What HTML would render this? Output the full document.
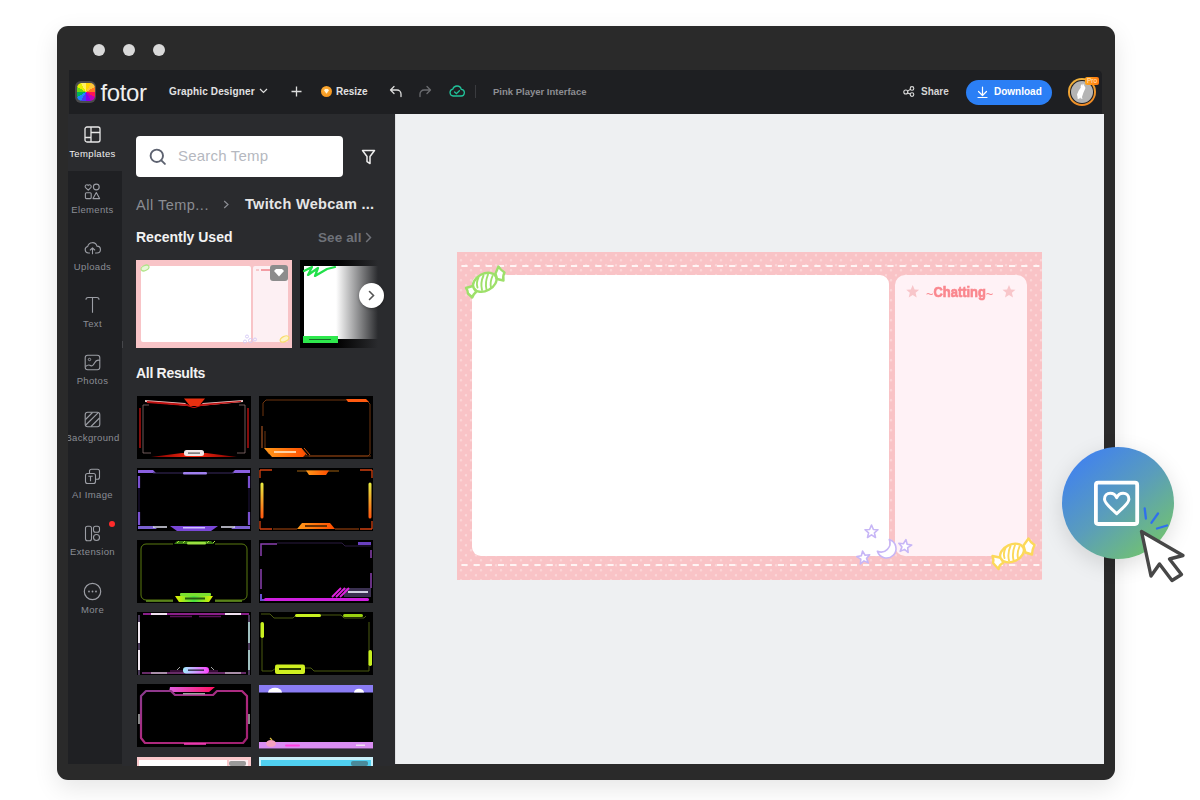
<!DOCTYPE html>
<html><head><meta charset="utf-8">
<style>
*{margin:0;padding:0;box-sizing:border-box}
html,body{width:1200px;height:800px;overflow:hidden;background:#fff;font-family:"Liberation Sans",sans-serif}
.a{position:absolute}
#win{left:57px;top:26px;width:1058px;height:754px;background:#2a2a2a;border-radius:11px;box-shadow:0 8px 24px rgba(0,0,0,0.10)}
.dot{width:12px;height:12px;border-radius:50%;background:#d9d9d9;top:44px}
#hdr{left:69px;top:70px;width:1032.5px;height:44px;background:#1e1f22;border-radius:0 5px 0 0}
#side{left:68px;top:114px;width:54px;height:650px;background:#1f2023}
#panel{left:122px;top:114px;width:273px;height:652px;background:#2a2b2e}
#canvas{left:395px;top:114px;width:709px;height:650px;background:#eef0f2;border-left:1.5px solid #dfe0e3}
.t{color:#fff;white-space:nowrap}
.sl{left:62px;width:61px;text-align:center;font-size:9.5px;line-height:12px;letter-spacing:0.35px;color:#8a8d94}
.th{filter:blur(0.35px)}
</style></head>
<body>
<div id="win" class="a"></div>
<div class="a dot" style="left:93px"></div>
<div class="a dot" style="left:123px"></div>
<div class="a dot" style="left:153px"></div>
<div id="hdr" class="a"></div>
<div id="side" class="a"></div>
<div id="panel" class="a"></div>
<div id="canvas" class="a"></div>

<!-- header content -->
<div class="a" style="left:75px;top:81px;width:21px;height:22px;border-radius:6px;background:#4a4a4c"></div>
<div class="a" style="left:77px;top:83px;width:18px;height:18px;border-radius:5px;background:conic-gradient(from 0deg at 50% 50%,#ffd400 0 30deg,#ffc53a 30deg 60deg,#ff7a1f 60deg 90deg,#ff1454 90deg 120deg,#c000b8 120deg 150deg,#8a00ef 150deg 180deg,#4540f5 180deg 210deg,#1a8cff 210deg 240deg,#00b45a 240deg 270deg,#6fd714 270deg 300deg,#e4ee00 300deg 330deg,#fff060 330deg 360deg)"></div>
<div class="a t" style="left:100.5px;top:78px;font-size:24px;line-height:30px;letter-spacing:-0.4px;color:#eeeeee">fotor</div>
<div class="a t" id="gd" style="left:169px;top:85px;letter-spacing:0.15px;font-size:10px;line-height:13px;font-weight:bold;color:#e2e2e2">Graphic Designer</div>
<svg class="a" style="left:259px;top:88px" width="9" height="6" viewBox="0 0 9 6"><path d="M1 1l3.5 3.5L8 1" fill="none" stroke="#ddd" stroke-width="1.2"/></svg>
<svg class="a" style="left:291px;top:86px" width="11" height="11" viewBox="0 0 11 11"><path d="M5.5 0.5v10M0.5 5.5h10" stroke="#ddd" stroke-width="1.3"/></svg>
<div class="a" style="left:321px;top:86px;width:11px;height:11px;border-radius:50%;background:radial-gradient(circle at 40% 35%,#ffb13b,#f08a12)"></div>
<svg class="a" style="left:323px;top:88px" width="7" height="7" viewBox="0 0 7 7"><path d="M1 2.2L2.2 1h2.6L6 2.2 3.5 5.8z" fill="#fff3d9"/></svg>
<div class="a t" id="rs" style="left:336px;top:85px;font-size:10px;line-height:13px;font-weight:bold;color:#e2e2e2">Resize</div>
<svg class="a" style="left:389px;top:85px" width="14" height="13" viewBox="0 0 14 13"><path d="M5 1.5L1.5 5 5 8.5M1.5 5H8a4 4 0 0 1 4 4v2.5" fill="none" stroke="#ddd" stroke-width="1.3" stroke-linecap="round" stroke-linejoin="round"/></svg>
<svg class="a" style="left:418px;top:85px" width="14" height="13" viewBox="0 0 14 13"><path d="M9 1.5L12.5 5 9 8.5M12.5 5H6a4 4 0 0 0 -4 4v2.5" fill="none" stroke="#6b6c70" stroke-width="1.3" stroke-linecap="round" stroke-linejoin="round"/></svg>
<svg class="a" style="left:449px;top:84px" width="16" height="14" viewBox="0 0 16 14"><path d="M4.2 12H11.8a3.3 3.3 0 0 0 .5-6.6A4.4 4.4 0 0 0 3.8 5.1 3.5 3.5 0 0 0 4.2 12z" fill="none" stroke="#21c29a" stroke-width="1.3"/><path d="M5.6 8l1.8 1.7 3-3" fill="none" stroke="#21c29a" stroke-width="1.3" stroke-linecap="round"/></svg>
<div class="a" style="left:475px;top:85px;width:1px;height:13px;background:#3a3b3f"></div>
<div class="a t" id="pp" style="left:493px;top:86px;font-size:9.5px;line-height:12px;font-weight:bold;color:#8d8e93">Pink Player Interface</div>
<svg class="a" style="left:903px;top:86px" width="12" height="11" viewBox="0 0 12 11"><circle cx="2.8" cy="6" r="2" fill="none" stroke="#ddd" stroke-width="1.1"/><circle cx="9" cy="2.4" r="1.8" fill="none" stroke="#ddd" stroke-width="1.1"/><circle cx="9" cy="8.6" r="1.8" fill="none" stroke="#ddd" stroke-width="1.1"/><path d="M4.6 5.1L7.3 3.4M4.6 6.9L7.3 8" stroke="#ddd" stroke-width="1.1"/></svg>
<div class="a t" id="sh" style="left:921px;top:85px;font-size:10px;line-height:13px;font-weight:bold;color:#d4d4d4">Share</div>
<div class="a" style="left:966px;top:80px;width:86px;height:25px;border-radius:13px;background:#2b7ff5"></div>
<svg class="a" style="left:977px;top:86px" width="11" height="13" viewBox="0 0 11 13"><path d="M5.5 1v8.5M1.5 5.5l4 4 4-4M1 11.5h9" fill="none" stroke="#fff" stroke-width="1.2" stroke-linecap="round" stroke-linejoin="round"/></svg>
<div class="a t" id="dl" style="left:994px;top:85px;font-size:10px;line-height:13px;font-weight:bold">Download</div>
<div class="a" style="left:1068px;top:78px;width:28px;height:28px;border-radius:50%;background:linear-gradient(160deg,#f0b840,#ee8220)"></div>
<div class="a" style="left:1070.2px;top:80.2px;width:23.6px;height:23.6px;border-radius:50%;background:#1e1f22"></div>
<div class="a" style="left:1070.6px;top:80.6px;width:22.8px;height:22.8px;border-radius:50%;background:#b4b4b4"></div>
<svg class="a" style="left:1074px;top:82px" width="16" height="19" viewBox="0 0 16 19"><path d="M8.2 1.5l.6 2.2 1.2-2.5.3 2.8c.8.6 1.2 1.5 1 2.4l-1.8 4.2-1.6 4.6.8 1.2-1.8.4-.6-1.2-1.3 1.3-1.6-.3.2-1.4-.6-2.6 1.6-3.8 2.2-3.3-.2-1.6z" fill="#fff"/></svg>
<div class="a" style="left:1085px;top:76.5px;width:14px;height:8.5px;border-radius:2px;background:linear-gradient(90deg,#ffa61c,#ff7810)"></div>
<div class="a t" style="left:1085px;top:77px;font-size:6.5px;line-height:8px;width:14px;text-align:center;color:#ffe6c8">Pro</div>


<!-- sidebar -->
<div class="a" style="left:68px;top:114px;width:54px;height:57px;background:#2a2b2e"></div>
<svg class="a" style="left:84px;top:126px" width="17" height="17" viewBox="0 0 17 17"><rect x="1" y="1" width="15" height="15" rx="2" fill="none" stroke="#e8e8e8" stroke-width="1.3"/><path d="M7 1v15M7 6.5h9M1 11.5h6" stroke="#e8e8e8" stroke-width="1.3"/></svg>
<div class="a t sl" style="top:148px;color:#f0f0f0">Templates</div>
<svg class="a" style="left:84px;top:183px" width="17" height="17" viewBox="0 0 17 17"><path d="M4.2 7.2L1.6 4.6a1.7 1.7 0 0 1 2.6-2.2 1.7 1.7 0 0 1 2.6 2.2z" fill="none" stroke="#9c9ea5" stroke-width="1.1"/><circle cx="12.3" cy="4" r="2.9" fill="none" stroke="#9c9ea5" stroke-width="1.1"/><rect x="1.4" y="9.8" width="5.8" height="5.8" rx="1" fill="none" stroke="#9c9ea5" stroke-width="1.1"/><path d="M12.3 9.6l3.3 6H9z" fill="none" stroke="#9c9ea5" stroke-width="1.1" stroke-linejoin="round"/></svg>
<div class="a t sl" style="top:204px">Elements</div>
<svg class="a" style="left:84px;top:240px" width="17" height="15" viewBox="0 0 17 15"><path d="M5.5 13H4.3a3.3 3.3 0 0 1-.6-6.5 4.8 4.8 0 0 1 9.3-.4A3.3 3.3 0 0 1 13 13h-1.5" fill="none" stroke="#9c9ea5" stroke-width="1.1" stroke-linecap="round"/><path d="M8.5 13.8V8M6.3 10l2.2-2.2 2.2 2.2" fill="none" stroke="#9c9ea5" stroke-width="1.1" stroke-linecap="round" stroke-linejoin="round"/></svg>
<div class="a t sl" style="top:261px">Uploads</div>
<svg class="a" style="left:84px;top:296px" width="17" height="18" viewBox="0 0 17 18"><path d="M2 3.8Q2 1.5 4 1.5h9q2 0 2 2.3M8.5 1.5v15.3" fill="none" stroke="#9c9ea5" stroke-width="1.1"/></svg>
<div class="a t sl" style="top:318px">Text</div>
<svg class="a" style="left:84px;top:354px" width="17" height="17" viewBox="0 0 17 17"><rect x="1.2" y="1.2" width="14.6" height="14.6" rx="2.5" fill="none" stroke="#9c9ea5" stroke-width="1.1"/><path d="M1.5 12.5q3-2.5 5-1t4-2.5 5.5-2.5" fill="none" stroke="#9c9ea5" stroke-width="1.1"/><circle cx="5.5" cy="5.5" r="1.2" fill="none" stroke="#9c9ea5" stroke-width="1"/></svg>
<div class="a t sl" style="top:375px">Photos</div>
<svg class="a" style="left:84px;top:411px" width="17" height="17" viewBox="0 0 17 17"><rect x="1.2" y="1.2" width="14.6" height="14.6" rx="2.5" fill="none" stroke="#9c9ea5" stroke-width="1.1"/><path d="M1.5 8.5L8.5 1.5M1.8 14L14 1.8M7 15.5l8.5-8.5" stroke="#9c9ea5" stroke-width="1.1"/></svg>
<div class="a" style="left:68px;top:432px;width:54px;height:14px;overflow:hidden"><div class="a t sl" style="top:0;left:-6px;width:61px">Background</div></div>
<svg class="a" style="left:84px;top:468px" width="17" height="17" viewBox="0 0 17 17"><rect x="5.5" y="1.2" width="10" height="10" rx="2" fill="none" stroke="#9c9ea5" stroke-width="1.1"/><rect x="1.5" y="5.5" width="10" height="10" rx="2" fill="#1f2023" stroke="#9c9ea5" stroke-width="1.1"/><path d="M4.3 8.3h4.4M6.5 8.3v5" stroke="#9c9ea5" stroke-width="1.1"/></svg>
<div class="a t sl" style="top:489px">AI Image</div>
<svg class="a" style="left:84px;top:525px" width="17" height="17" viewBox="0 0 17 17"><rect x="1.5" y="1.2" width="6" height="14.6" rx="2" fill="none" stroke="#9c9ea5" stroke-width="1.1"/><rect x="9.5" y="1.2" width="6" height="6" rx="2" fill="none" stroke="#9c9ea5" stroke-width="1.1"/><circle cx="12.5" cy="12.5" r="3" fill="none" stroke="#9c9ea5" stroke-width="1.1"/></svg>
<div class="a" style="left:109px;top:521px;width:6px;height:6px;border-radius:50%;background:#ff2b2b"></div>
<div class="a t sl" style="top:546px">Extension</div>
<svg class="a" style="left:83px;top:582px" width="19" height="19" viewBox="0 0 19 19"><circle cx="9.5" cy="9.5" r="8.2" fill="none" stroke="#9c9ea5" stroke-width="1.2"/><circle cx="6" cy="9.5" r="0.9" fill="#9c9ea5"/><circle cx="9.5" cy="9.5" r="0.9" fill="#9c9ea5"/><circle cx="13" cy="9.5" r="0.9" fill="#9c9ea5"/></svg>
<div class="a t sl" style="top:604px">More</div>

<!-- panel -->
<div class="a" style="left:122px;top:341px;width:1px;height:7px;background:#46474b"></div>
<div class="a" style="left:136px;top:136px;width:207px;height:41px;border-radius:4px;background:#fff"></div>
<svg class="a" style="left:149px;top:148px" width="18" height="18" viewBox="0 0 18 18"><circle cx="7.8" cy="7.8" r="6.2" fill="none" stroke="#5d6270" stroke-width="1.9"/><path d="M12.3 12.3l3.6 3.6" stroke="#5d6270" stroke-width="1.9" stroke-linecap="round"/></svg>
<div class="a" style="left:178px;top:145px;width:90px;height:22px;overflow:hidden"><div class="t" style="font-size:15px;line-height:22px;color:#b5b8c0;letter-spacing:0.2px">Search Templates</div></div>
<svg class="a" style="left:361px;top:149px" width="15" height="16" viewBox="0 0 15 16"><path d="M1.5 1.5h12L9 7.5v7l-3-1.8V7.5z" fill="none" stroke="#eee" stroke-width="1.5" stroke-linejoin="round"/></svg>
<div class="a t" id="bc1" style="left:136px;top:196.5px;letter-spacing:0.5px;font-size:14.5px;line-height:17px;color:#8b8d93">All Temp...</div>
<svg class="a" style="left:223px;top:200px" width="7" height="9" viewBox="0 0 7 9"><path d="M1.2 1l3.8 3.5L1.2 8" fill="none" stroke="#8b8d93" stroke-width="1.2"/></svg>
<div class="a t" id="bc2" style="left:245px;top:196px;letter-spacing:0.3px;font-size:14.5px;line-height:17px;font-weight:bold;color:#e6e6e6">Twitch Webcam ...</div>
<div class="a t" id="ru" style="left:136px;top:229px;font-size:14px;line-height:17px;font-weight:bold;color:#f2f2f2">Recently Used</div>
<div class="a t" id="sa" style="left:318px;top:229.5px;font-size:13.5px;line-height:16px;font-weight:bold;color:#6f7279;letter-spacing:0.1px">See all</div>
<svg class="a" style="left:365px;top:232px" width="7" height="11" viewBox="0 0 7 11"><path d="M1.2 1l4.3 4.5L1.2 10" fill="none" stroke="#6f7279" stroke-width="1.5"/></svg>
<div class="a t" id="ar" style="left:136px;top:365px;letter-spacing:-0.3px;font-size:14px;line-height:17px;font-weight:bold;color:#f2f2f2">All Results</div>

<!-- recently used -->
<div class="a" style="left:136px;top:260px;width:156px;height:88px;background:#f8c4c7"></div>
<div class="a" style="left:140.5px;top:265.5px;width:110px;height:76px;background:#fff;border-radius:2px"></div>
<div class="a" style="left:253px;top:265.5px;width:35px;height:76px;background:#fdf0f3;border-radius:2px"></div>
<div class="a" style="left:256px;top:268.5px;width:3px;height:2px;background:#f7c8cb"></div><div class="a" style="left:261px;top:268.5px;width:10px;height:2px;background:#f08890;opacity:.8"></div>
<svg class="a" style="left:139px;top:263px" width="12" height="10" viewBox="0 0 12 10"><ellipse cx="6" cy="5" rx="4.2" ry="2.5" transform="rotate(-25 6 5)" fill="#e8f8d8" stroke="#b0e488" stroke-width="1.2"/></svg>
<svg class="a" style="left:278px;top:334px" width="13" height="10" viewBox="0 0 13 10"><ellipse cx="6.5" cy="5" rx="4.6" ry="2.6" transform="rotate(-25 6.5 5)" fill="#fdf3c8" stroke="#f8dc70" stroke-width="1.2"/></svg>
<svg class="a" style="left:242px;top:334px" width="18" height="10" viewBox="0 0 18 10"><circle cx="5" cy="2.5" r="1.5" fill="none" stroke="#d4c8f5" stroke-width="0.9"/><circle cx="3" cy="7.5" r="1.5" fill="none" stroke="#d4c8f5" stroke-width="0.9"/><circle cx="8.5" cy="6.5" r="2" fill="none" stroke="#d4c8f5" stroke-width="0.9"/><circle cx="13" cy="5.5" r="1.5" fill="none" stroke="#d4c8f5" stroke-width="0.9"/></svg>
<div class="a" style="left:270px;top:264.5px;width:17.5px;height:16px;border-radius:3px;background:#8c8c8c"></div>
<svg class="a" style="left:273px;top:268px" width="12" height="9" viewBox="0 0 12 9"><path d="M1 3l2-2h6l2 2-5 5.5z" fill="#fff"/></svg>

<div class="a" style="left:300px;top:260px;width:78px;height:88px;overflow:hidden">
  <div class="a" style="left:0;top:0;width:78px;height:88px;background:#000"></div>
  <div class="a" style="left:4px;top:5.5px;width:74px;height:73px;background:#fff"></div>
  <svg class="a" style="left:3px;top:4px" width="34" height="16" viewBox="0 0 34 16"><path d="M1 7l8-4-4 8 10-7-3 8 12-7 8-2" fill="none" stroke="#22e04a" stroke-width="2.2" stroke-linejoin="round" stroke-linecap="round"/></svg>
  <div class="a" style="left:3px;top:76px;width:35px;height:6.5px;background:#2ee84d"></div>
  <div class="a" style="left:9px;top:78.5px;width:22px;height:1.5px;background:#1a6a2a"></div>
  <div class="a" style="left:36px;top:0;width:42px;height:88px;background:linear-gradient(90deg,rgba(42,43,46,0),rgba(42,43,46,1))"></div>
</div>
<div class="a" style="left:359px;top:282.5px;width:25px;height:25px;border-radius:50%;background:#fff;box-shadow:0 1px 3px rgba(0,0,0,.3)"></div>
<svg class="a" style="left:367px;top:290px" width="9" height="11" viewBox="0 0 9 11"><path d="M2.5 1.5L6.5 5.5 2.5 9.5" fill="none" stroke="#555" stroke-width="1.6" stroke-linecap="round"/></svg>
<svg class="a" style="left:0;top:0" width="0" height="0"><defs>
<linearGradient id="gR" x1="0" x2="1"><stop offset="0" stop-color="#7a0000"/><stop offset=".5" stop-color="#ff2a10"/><stop offset="1" stop-color="#7a0000"/></linearGradient>
<linearGradient id="gO" x1="0" x2="1"><stop offset="0" stop-color="#ff9a1a"/><stop offset="1" stop-color="#ff4d00"/></linearGradient>
<linearGradient id="gY" x1="0" x2="0" y1="0" y2="1"><stop offset="0" stop-color="#e8e840"/><stop offset="1" stop-color="#ff5a10"/></linearGradient>
<linearGradient id="gG" x1="0" x2="1"><stop offset="0" stop-color="#e4f000"/><stop offset=".5" stop-color="#4ae040"/><stop offset="1" stop-color="#e4f000"/></linearGradient>
<linearGradient id="gC" x1="0" x2="1"><stop offset="0" stop-color="#9ff0ff"/><stop offset="1" stop-color="#ff40ff"/></linearGradient>
<linearGradient id="gP" x1="0" x2="1"><stop offset="0" stop-color="#e060e0"/><stop offset="1" stop-color="#ff1060"/></linearGradient>
<linearGradient id="gF" x1="0" x2="1" y1="0" y2="1"><stop offset="0" stop-color="#8a3a8e"/><stop offset=".5" stop-color="#b02a80"/><stop offset="1" stop-color="#a02070"/></linearGradient>
</defs></svg>
<svg class="a th" style="left:136.5px;top:395.5px" width="114" height="63" viewBox="0 0 114 63"><rect width="114" height="63" fill="#000"/><path d="M8 4L48 7 52 10 8 6z" fill="#e8c0c0"/><path d="M106 4L66 7 62 10 106 6z" fill="#e8c0c0"/><path d="M10 5L50 8 56 11 58 11 64 8 104 5 104 6 64 10 58 12 56 12 50 10 10 7z" fill="#c01010"/><path d="M47 2.5h21l-6 7.5h-9z" fill="#e83010"/><path d="M6 9v48h8M108 9v48h-8M6 9h6M108 9h-6" fill="none" stroke="#8a7070" stroke-width="0.8"/><path d="M3 12v40M111 12v40" stroke="#b01010" stroke-width="1.5"/><path d="M14 61L45 57h24l31 4z" fill="url(#gR)"/><rect x="47" y="54" width="20" height="6" rx="2.5" fill="#f0e8e8"/><rect x="51" y="56.5" width="12" height="1.2" fill="#555"/></svg>
<svg class="a th" style="left:259px;top:395.5px" width="114" height="63" viewBox="0 0 114 63"><rect width="114" height="63" fill="#000"/><path d="M4 20V7l3-3h40M47 4h60l4 4v45M111 53v5l-2 2H40M6 35v17l4 6" fill="none" stroke="#7a3a10" stroke-width="0.9"/><path d="M3 30v22" stroke="#a05020" stroke-width="1.2"/><path d="M87 3h20l3 3H89z" fill="#ff5a10"/><path d="M5 52h37l5 6-3 3H13z" fill="url(#gO)"/><rect x="15" y="55" width="22" height="2" fill="#ffd0a0"/><path d="M42 52l6 7M45 52l6 7" stroke="#ff6a10" stroke-width="0.8"/><path d="M50 60h62" stroke="#8a4010" stroke-width="0.8"/></svg>
<svg class="a th" style="left:136.5px;top:467.5px" width="114" height="63" viewBox="0 0 114 63"><rect width="114" height="63" fill="#000"/><path d="M1 2h15l3 3H1zM113 2H98l-3 3h18z" fill="#8a60e0"/><rect x="46" y="4" width="24" height="2.5" rx="1" fill="#a080f0"/><path d="M16 5h30M70 5h27" stroke="#3a2a60" stroke-width="1"/><path d="M2 8v12M112 8v12M2 44v13M112 44v13" stroke="#7a50d0" stroke-width="2.2"/><path d="M2 20v24M112 20v24" stroke="#2a1a50" stroke-width="0.8"/><path d="M1 58h15l4 3H1zM113 58H98l-4 3h19z" fill="#7a60d0"/><path d="M33 58h48l-7 5H40z" fill="#7a48d8"/><rect x="46" y="59" width="22" height="1.5" fill="#d0c0ff"/><path d="M16 59h14M84 59h14" stroke="#e0e0f0" stroke-width="1.5"/></svg>
<svg class="a th" style="left:259px;top:467.5px" width="114" height="63" viewBox="0 0 114 63"><rect width="114" height="63" fill="#000"/><path d="M1 2h12M101 2h12M1 2v8M113 2v8M1 61h12M101 61h12M1 61v-8M113 61v-8" stroke="#d04010" stroke-width="1.3"/><path d="M38 3h42" stroke="#a06010" stroke-width="1"/><path d="M47 2.5h23l-3 4.5H50z" fill="url(#gO)"/><path d="M3 16v33M111 16v33" stroke="url(#gY)" stroke-width="3" stroke-linecap="round"/><path d="M38 61l5-6h28l5 6z" fill="url(#gO)"/><rect x="46" y="57" width="22" height="2" fill="#6a3000"/><path d="M14 61h24M76 61h24" stroke="#c05010" stroke-width="0.9"/></svg>
<svg class="a th" style="left:136.5px;top:539.5px" width="114" height="63" viewBox="0 0 114 63"><rect width="114" height="63" fill="#000"/><path d="M36 4H9a5 5 0 0 0-5 5v46a5 5 0 0 0 5 5h27M78 4h27a5 5 0 0 1 5 5v46a5 5 0 0 1-5 5H78" fill="none" stroke="#5a7a10" stroke-width="1"/><path d="M37 4l3-3h34l3 3z" fill="#3a7a10"/><rect x="50" y="2" width="19" height="2.5" rx="1" fill="#9ae040"/><path d="M40 3l2-2M46 3l2-2M70 3l2-2M76 3l2-2" stroke="#a0e040" stroke-width="1"/><rect x="43" y="53" width="31" height="3" rx="1" fill="#7ae030"/><path d="M38 56h38l-4 6H42z" fill="url(#gG)"/><rect x="48" y="57.5" width="20" height="2" fill="#2a5a10"/><path d="M9 61h27M78 61h27" stroke="#6a9a20" stroke-width="1.4"/></svg>
<svg class="a th" style="left:259px;top:539.5px" width="114" height="63" viewBox="0 0 114 63"><rect width="114" height="63" fill="#000"/><path d="M2 16V4h16M2 29v20M112 33v15M112 10v8" stroke="#8a40b0" stroke-width="1.5"/><path d="M18 3h65l3 3h26" fill="none" stroke="#2a1a40" stroke-width="1"/><rect x="99" y="2" width="13" height="3" fill="#6a40c0"/><path d="M2 54v6h6" fill="none" stroke="#6a50d0" stroke-width="2"/><rect x="85" y="48" width="27" height="9" fill="#3a3050"/><rect x="89" y="51" width="20" height="2" fill="#d0d0e0"/><path d="M73 57l9-9M77 57l9-9M81 57l9-9" stroke="#e020e0" stroke-width="1.8"/><rect x="5" y="58" width="105" height="3" rx="1.5" fill="#d020e0"/></svg>
<svg class="a th" style="left:136.5px;top:611.5px" width="114" height="63" viewBox="0 0 114 63"><rect width="114" height="63" fill="#000"/><path d="M6 2h106" stroke="#8a208a" stroke-width="2"/><path d="M14 2h16M88 2h16" stroke="#f0e0f0" stroke-width="2"/><path d="M33 4.5h22M62 4.5h22" stroke="#5a105a" stroke-width="1.5"/><path d="M2 3v60M112 3v60" stroke="#4a3a5a" stroke-width="2"/><path d="M2 10v21M2 38v20" stroke="#f0e8f0" stroke-width="2"/><path d="M112 10v21M112 38v20" stroke="#a0c0c0" stroke-width="2"/><path d="M5 61h104" stroke="#8a3a8a" stroke-width="1.5"/><path d="M14 61h16M88 61h16" stroke="#c0b0c0" stroke-width="1.5"/><path d="M33 59h48" stroke="#4a104a" stroke-width="1.5"/><rect x="46" y="55" width="26" height="6.5" rx="3.2" fill="url(#gC)"/><rect x="51" y="57.5" width="16" height="1.3" fill="#223"/><path d="M40 58l3-3M74 55l3 3" stroke="#ccc" stroke-width="0.8"/></svg>
<svg class="a th" style="left:259px;top:611.5px" width="114" height="63" viewBox="0 0 114 63"><rect width="114" height="63" fill="#000"/><path d="M2 2h9l4 4h19l3-3h45l3 3h20l2-2M3 12v47h10l4-3h35l3 3h55V10" fill="none" stroke="#4a5a10" stroke-width="1"/><rect x="36" y="2" width="26" height="3" rx="1.5" fill="#c8f020"/><rect x="84" y="2" width="20" height="3" rx="1.5" fill="#9ad010"/><rect x="1.5" y="10" width="3.5" height="16" rx="1.7" fill="#c8f020"/><rect x="109.5" y="38" width="3.5" height="16" rx="1.7" fill="#c8f020"/><rect x="16" y="52.5" width="30" height="9.5" rx="2" fill="#d0f020"/><rect x="20" y="56" width="22" height="2" fill="#2a3a00"/></svg>
<svg class="a th" style="left:136.5px;top:684.0px" width="114" height="63" viewBox="0 0 114 63"><rect width="114" height="63.5" fill="#000"/><path d="M33 3h22l3 5H32zM55 3h23l-6 5H58z" fill="url(#gP)"/><path d="M34 7H9L4 12v42l4 5h98l4-5V12l-5-5H80l-4 4H38z" fill="none" stroke="url(#gF)" stroke-width="2.2" stroke-linejoin="round"/><path d="M47 60h22" stroke="#ff40c0" stroke-width="1.5"/><rect x="46" y="9" width="22" height="1.5" fill="#a0a0a0"/><rect x="1" y="30" width="2" height="10" fill="#888"/><rect x="111" y="30" width="2" height="10" fill="#888"/></svg>
<svg class="a th" style="left:259px;top:684.5px" width="114" height="64" viewBox="0 0 114 64"><rect width="114" height="63.5" fill="#000"/><rect width="114" height="7.5" fill="#8a7cf3"/><path d="M9 7.5a6 4 0 0 1 14 0z" fill="#fff"/><path d="M95 7.5a4 3 0 0 1 10 0z" fill="#fff"/><rect y="57" width="114" height="6.5" fill="#d98df2"/><ellipse cx="12" cy="58.5" rx="5" ry="3.5" fill="#f5a0c0"/><path d="M11 53l2 2" stroke="#e0c040" stroke-width="1.2"/><rect x="26" y="59.5" width="15" height="2" rx="1" fill="#ff40e0"/><rect x="97" y="59.5" width="9" height="1.5" fill="#f0e0f0"/></svg>
<div class="a" style="left:136.5px;top:757px;width:114px;height:9px;background:#fac8cb"></div>
<div class="a" style="left:139px;top:760px;width:88px;height:6px;background:#fff"></div>
<div class="a" style="left:229px;top:760px;width:19px;height:6px;background:#fdf0f3"></div><div class="a" style="left:229px;top:761px;width:17px;height:5px;border-radius:2px;background:#9a9a9a"></div>
<div class="a" style="left:259px;top:757px;width:114px;height:9px;background:#c8f0fa"></div>
<div class="a" style="left:261px;top:759.5px;width:110px;height:6.5px;background:#50d0f0"></div><div class="a" style="left:351px;top:761px;width:17px;height:5px;border-radius:2px;background:#4a8a9a"></div>
<div class="a" style="left:122px;top:766px;width:273px;height:14px;background:#2a2a2a"></div>

<!-- canvas design -->
<svg class="a" style="left:457px;top:252px" width="585" height="328" viewBox="0 0 585 328">
 <defs>
  <radialGradient id="dg"><stop offset="0" stop-color="#fcd9db"/><stop offset=".55" stop-color="#fbd3d5"/><stop offset="1" stop-color="#f9c3c6"/></radialGradient>
  <pattern id="dots" x="0" y="0" width="10" height="10" patternUnits="userSpaceOnUse">
   <rect width="10" height="10" fill="#f9c3c6"/>
   <circle cx="9" cy="3.3" r="1.7" fill="url(#dg)"/><circle cx="4" cy="8.3" r="1.7" fill="url(#dg)"/>
  </pattern>
 </defs>
 <rect width="585" height="328" fill="url(#dots)"/>
 <path d="M4.4 14h578M4.4 313h578" stroke="#fff4f4" stroke-width="2" stroke-dasharray="6.2 5.97"/>
</svg>
<div class="a" style="left:472px;top:275px;width:416.5px;height:280.5px;background:#fff;border-radius:9px"></div>
<div class="a" style="left:895px;top:275px;width:132px;height:281px;background:#fff2f6;border-radius:10px"></div>
<svg class="a" style="left:900px;top:280px" width="124" height="24" viewBox="0 0 124 24">
 <path transform="translate(12.7 11.5)" d="M0-6.5L1.9-2 6.5-1.8 2.9 1.3 4 6 0 3.4-4 6-2.9 1.3-6.5-1.8-1.9-2Z" fill="#f8c6ca"/>
 <path transform="translate(109 11.5)" d="M0-6.5L1.9-2 6.5-1.8 2.9 1.3 4 6 0 3.4-4 6-2.9 1.3-6.5-1.8-1.9-2Z" fill="#f8c6ca"/>
</svg>
<div class="a t" id="chat" style="left:926px;top:283px;font-size:15px;line-height:18px;font-weight:bold;color:#fa878e;transform:scaleX(0.86);transform-origin:0 0"><span style="font-weight:normal;position:relative;top:1.5px">~</span><span style="-webkit-text-stroke:0.7px #fa878e">Chatting</span><span style="font-weight:normal;position:relative;top:1.5px">~</span></div>
<svg class="a" style="left:460px;top:262px" width="50" height="40" viewBox="0 0 50 40">
 <g fill="#fff" stroke="#9ee06a" stroke-width="2.4" stroke-linejoin="round" stroke-linecap="round">
  <path d="M14.5 23.5L6 26Q8 28.5 8 31.5L12.3 35.5Q13 32.5 16 30Z"/>
  <path d="M35.5 11.5L38.5 4.5Q40.5 8 44.5 10.5Q42.5 14 43.5 18.5L37 17Z"/>
  <ellipse cx="24.8" cy="20.3" rx="12.5" ry="8.5" transform="rotate(-28 24.8 20.3)"/>
 </g>
 <path d="M17.5 25.5c-1-3-.5-7 1-10M22 28c-1-4-.5-10 1.5-14.5M26.5 27.5c-1-4-.5-10 1.5-15M31 25.5c-1-4 0-8 1.5-11.5" fill="none" stroke="#9ee06a" stroke-width="1.9" stroke-linecap="round"/>
</svg>
<svg class="a" style="left:985px;top:533px" width="56" height="42" viewBox="0 0 56 42">
 <g fill="#fff" stroke="#fcd95a" stroke-width="2.4" stroke-linejoin="round" stroke-linecap="round">
  <path d="M17 25L7.5 23Q9 27 8 30L13.5 36Q14 32 18 30Z"/>
  <path d="M38.5 12.5L43.5 5.5Q45.5 9.5 49.5 12Q47 16.5 47 21.5L40.5 19.5Z"/>
  <ellipse cx="27" cy="20" rx="12.5" ry="8.5" transform="rotate(-25 27 20)"/>
 </g>
 <path d="M19.5 25c-1-3-.5-7 1-10M24 27.5c-1-4-.5-10 1.5-14.5M28.5 27c-1-4-.5-10 1.5-15M33 25c-1-4 0-8 1.5-11.5" fill="none" stroke="#fcd95a" stroke-width="1.9" stroke-linecap="round"/>
</svg>
<svg class="a" style="left:850px;top:518px" width="70" height="52" viewBox="0 0 70 52">
 <g fill="#fff" stroke="#c7b6f6" stroke-width="1.6" stroke-linejoin="round">
  <path transform="translate(21.5 13.5)" d="M0-6.5L1.9-2 6.5-1.8 2.9 1.3 4 6 0 3.4-4 6-2.9 1.3-6.5-1.8-1.9-2Z"/>
  <path transform="translate(55 28) rotate(8)" d="M0-6.5L1.9-2 6.5-1.8 2.9 1.3 4 6 0 3.4-4 6-2.9 1.3-6.5-1.8-1.9-2Z"/>
  <path transform="translate(13.5 39.5) rotate(-8)" d="M0-6.5L1.9-2 6.5-1.8 2.9 1.3 4 6 0 3.4-4 6-2.9 1.3-6.5-1.8-1.9-2Z"/>
  <path d="M39.25 21.4A9.5 9.5 0 1 1 27.4 33.25A9 9 0 0 0 39.25 21.4Z"/>
 </g>
</svg>

<!-- badge -->
<div class="a" style="left:1061.5px;top:446.5px;width:112px;height:112px;border-radius:50%;background:linear-gradient(140deg,#3f80f2 8%,#5a9dbb 50%,#74c56a 92%);box-shadow:0 6px 22px rgba(0,0,0,0.13)"></div>
<svg class="a" style="left:1090px;top:476px" width="100" height="110" viewBox="0 0 100 110">
 <rect x="5.9" y="6.7" width="41.3" height="41.3" rx="2.2" fill="none" stroke="#fff" stroke-width="3.8"/>
 <path d="M26.7 37.6C22 33 14.5 27.5 14.5 23.2C14.5 19.6 17 17.3 20.3 17.3C23 17.3 25.5 19 26.7 21.6C27.9 19 30.4 17.3 33.1 17.3C36.4 17.3 38.9 19.6 38.9 23.2C38.9 27.5 31.4 33 26.7 37.6Z" fill="none" stroke="#fff" stroke-width="3" stroke-linejoin="round"/>
 <path d="M54.7 32.5l1.2 10M68 37.5l-6.5 9.2M77 49.5l-10 3" stroke="#2f70ee" stroke-width="2.3" stroke-linecap="round"/>
 <path d="M51.5 55.5L61 100 69.5 88 82 104.5 91.5 98.5 79.5 83 93 79.5z" fill="#fff" stroke="#474747" stroke-width="3.4" stroke-linejoin="round"/>
</svg>
</body></html>
